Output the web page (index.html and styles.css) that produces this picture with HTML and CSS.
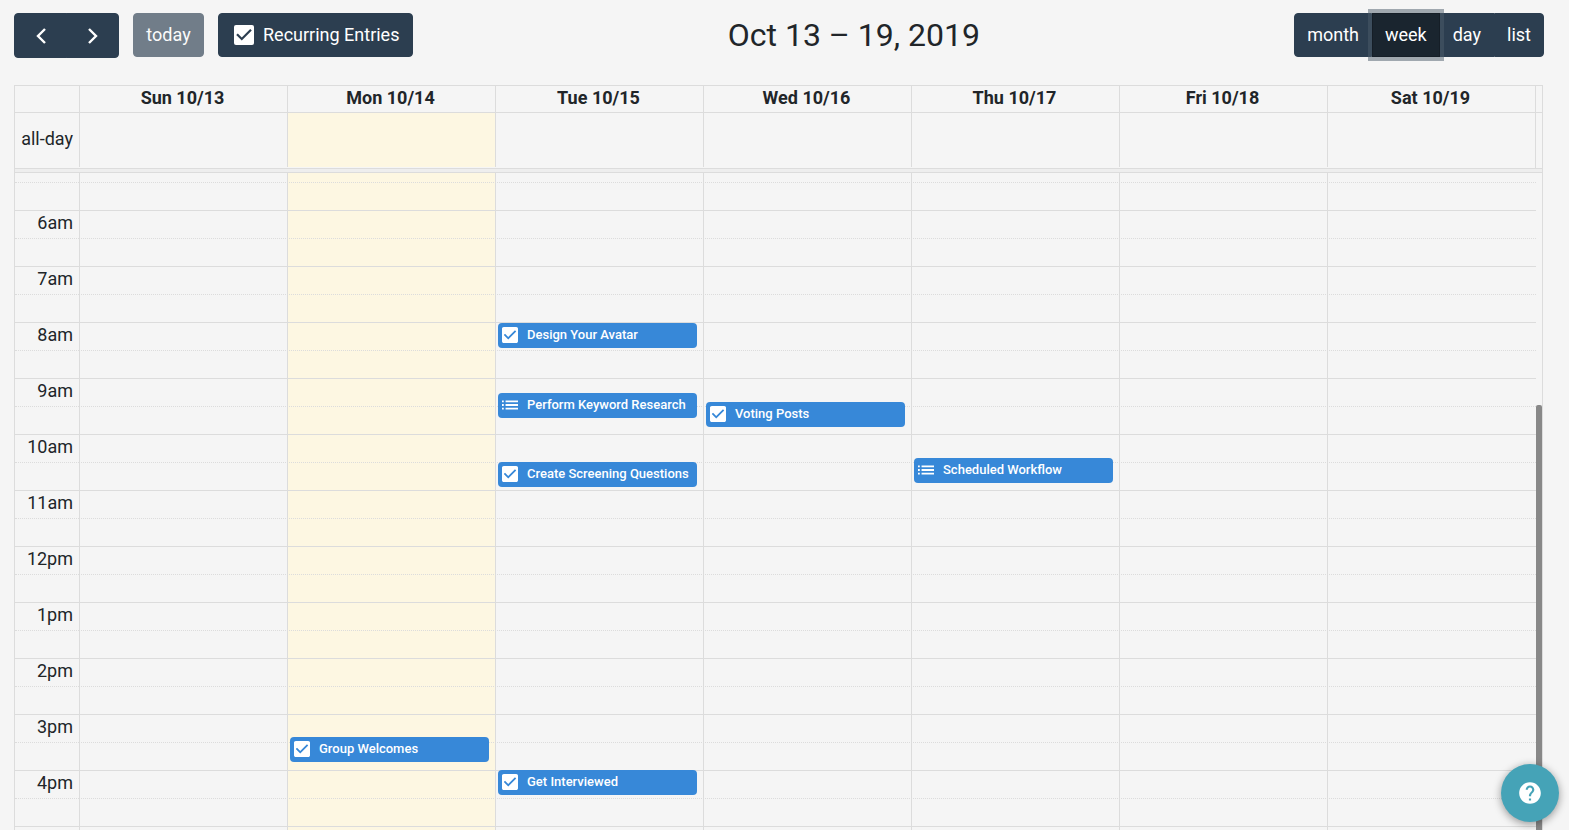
FILE: index.html
```
<!DOCTYPE html>
<html lang="en">
<head>
    <meta charset="UTF-8">
    <meta name="viewport" content="width=device-width, initial-scale=1.0">
    <title>Calendar</title>
    <link rel="stylesheet" href="styles.css">
</head>
<body>
    <!-- shared icons -->
    <svg class="sprite" aria-hidden="true">
        <symbol id="icon-tick" viewBox="3 3 18 18">
            <path d="M10 17l-5-5 1.41-1.41L10 14.17l7.59-7.59L19 8l-9 9z"/>
        </symbol>
        <symbol id="icon-task" viewBox="3 3 18 18">
            <path d="M19 3H5c-1.11 0-2 .9-2 2v14c0 1.1.89 2 2 2h14c1.11 0 2-.9 2-2V5c0-1.1-.89-2-2-2zm-9 14l-5-5 1.41-1.41L10 14.17l7.59-7.59L19 8l-9 9z"/>
        </symbol>
        <symbol id="icon-list" viewBox="3 3 18 18">
            <path d="M3 13h2v-2H3v2zm0 4h2v-2H3v2zm0-8h2V7H3v2zm4 4h14v-2H7v2zm0 4h14v-2H7v2zM7 7v2h14V7H7z"/>
        </symbol>
    </svg>

    <header class="toolbar">
        <div class="toolbar-left">
            <div class="btn-group">
                <button type="button" class="btn btn-arrow" aria-label="prev">
                    <svg width="12" height="18" viewBox="0 0 12 18"><path d="M10 2L3 9l7 7"/></svg>
                </button>
                <button type="button" class="btn btn-arrow" aria-label="next">
                    <svg width="12" height="18" viewBox="0 0 12 18"><path d="M2 2l7 7-7 7"/></svg>
                </button>
            </div>
            <button type="button" class="btn btn-today" disabled>today</button>
            <label class="btn btn-check">
                <span class="check">
                    <input type="checkbox" checked>
                    <svg><use href="#icon-tick"/></svg>
                </span>
                Recurring Entries
            </label>
        </div>
        <h2>Oct 13 – 19, 2019</h2>
        <div class="btn-group">
            <button type="button" class="btn">month</button>
            <button type="button" class="btn active">week</button>
            <button type="button" class="btn">day</button>
            <button type="button" class="btn">list</button>
        </div>
    </header>

    <main class="calendar">
        <div class="row head-row">
            <table>
                <tr>
                    <th class="axis"></th>
                    <th>Sun 10/13</th>
                    <th>Mon 10/14</th>
                    <th>Tue 10/15</th>
                    <th>Wed 10/16</th>
                    <th>Thu 10/17</th>
                    <th>Fri 10/18</th>
                    <th>Sat 10/19</th>
                </tr>
            </table>
        </div>
        <div class="row all-day-row">
            <table>
                <tr>
                    <td class="axis">all-day</td>
                    <td></td>
                    <td class="today"></td>
                    <td></td>
                    <td></td>
                    <td></td>
                    <td></td>
                    <td></td>
                </tr>
            </table>
        </div>
        <div class="divider"></div>

        <div class="scroller">
            <div class="time-grid">
                <table class="slats">
                    <tr><td class="axis"></td><td></td></tr>
                    <tr class="minor"><td class="axis"></td><td></td></tr>
                    <tr><td class="axis">6am</td><td></td></tr>
                    <tr class="minor"><td class="axis"></td><td></td></tr>
                    <tr><td class="axis">7am</td><td></td></tr>
                    <tr class="minor"><td class="axis"></td><td></td></tr>
                    <tr><td class="axis">8am</td><td></td></tr>
                    <tr class="minor"><td class="axis"></td><td></td></tr>
                    <tr><td class="axis">9am</td><td></td></tr>
                    <tr class="minor"><td class="axis"></td><td></td></tr>
                    <tr><td class="axis">10am</td><td></td></tr>
                    <tr class="minor"><td class="axis"></td><td></td></tr>
                    <tr><td class="axis">11am</td><td></td></tr>
                    <tr class="minor"><td class="axis"></td><td></td></tr>
                    <tr><td class="axis">12pm</td><td></td></tr>
                    <tr class="minor"><td class="axis"></td><td></td></tr>
                    <tr><td class="axis">1pm</td><td></td></tr>
                    <tr class="minor"><td class="axis"></td><td></td></tr>
                    <tr><td class="axis">2pm</td><td></td></tr>
                    <tr class="minor"><td class="axis"></td><td></td></tr>
                    <tr><td class="axis">3pm</td><td></td></tr>
                    <tr class="minor"><td class="axis"></td><td></td></tr>
                    <tr><td class="axis">4pm</td><td></td></tr>
                    <tr class="minor"><td class="axis"></td><td></td></tr>
                    <tr><td class="axis"></td><td></td></tr>
                </table>
                <!-- event top = time since 5am, 56px per hour -->
                <div class="days">
                    <div class="day"></div>
                    <div class="day today">
                        <a href="#" class="event" style="top: 583px"><svg><use href="#icon-task"/></svg>Group Welcomes</a>
                    </div>
                    <div class="day">
                        <a href="#" class="event" style="top: 169px"><svg><use href="#icon-task"/></svg>Design Your Avatar</a>
                        <a href="#" class="event" style="top: 239px"><svg><use href="#icon-list"/></svg>Perform Keyword Research</a>
                        <a href="#" class="event" style="top: 308px"><svg><use href="#icon-task"/></svg>Create Screening Questions</a>
                        <a href="#" class="event" style="top: 616px"><svg><use href="#icon-task"/></svg>Get Interviewed</a>
                    </div>
                    <div class="day">
                        <a href="#" class="event" style="top: 248px"><svg><use href="#icon-task"/></svg>Voting Posts</a>
                    </div>
                    <div class="day">
                        <a href="#" class="event" style="top: 304px"><svg><use href="#icon-list"/></svg>Scheduled Workflow</a>
                    </div>
                    <div class="day"></div>
                    <div class="day"></div>
                </div>
            </div>
            <div class="scrollbar"><div class="thumb"></div></div>
        </div>
    </main>

    <button type="button" class="help" aria-label="Help">
        <svg viewBox="0 0 24 24"><path d="M12 2C6.48 2 2 6.48 2 12s4.48 10 10 10 10-4.48 10-10S17.52 2 12 2zm1 17h-2v-2h2v2zm2.07-7.75l-.9.92C13.45 12.9 13 13.5 13 15h-2v-.5c0-1.1.45-2.1 1.17-2.83l1.24-1.26c.37-.36.59-.86.59-1.41 0-1.1-.9-2-2-2s-2 .9-2 2H8c0-2.21 1.79-4 4-4s4 1.79 4 4c0 .88-.36 1.68-.93 2.25z"/></svg>
    </button>
</body>
</html>
```
FILE: styles.css
```
* {
    box-sizing: border-box;
}
body {
    display: flex;
    flex-direction: column;
    height: 100vh;
    margin: 0;
    padding: 13px 25px 0 14px;
    overflow: hidden;
    background-color: #f5f5f5;
    color: #212529;
    font-family: Roboto, sans-serif;
    font-size: 18px;
    line-height: 24px;
}
.sprite {
    display: none;
}

/* Toolbar */
.toolbar {
    display: flex;
    justify-content: space-between;
    align-items: flex-start;
    height: 72px;
    flex-shrink: 0;
}
.toolbar-left {
    display: flex;
    align-items: flex-start;
    gap: 14px;
}
.toolbar h2 {
    margin: 0;
    font-size: 32px;
    font-weight: 400;
    line-height: 44px;
}
.btn-group {
    display: flex;
}
.btn {
    height: 44px;
    padding: 0 12px;
    border: 1px solid #2c3e50;
    border-radius: 4px;
    background-color: #2c3e50;
    color: #fff;
    font-family: inherit;
    font-size: 18px;
    line-height: 24px;
}
.btn:disabled {
    opacity: 0.65;
}
.btn-group .btn {
    position: relative;
}
.btn-group .btn:not(:first-child) {
    border-top-left-radius: 0;
    border-bottom-left-radius: 0;
}
.btn-group .btn:not(:last-child) {
    border-top-right-radius: 0;
    border-bottom-right-radius: 0;
}
.btn.active {
    z-index: 1;
    border-color: #151e27;
    background-color: #1a252f;
    box-shadow: 0 0 0 4px rgba(76, 91, 106, 0.5);
}
.btn-arrow {
    display: flex;
    align-items: center;
    justify-content: center;
    width: 53px;
    height: 45px;
}
.btn-arrow + .btn-arrow {
    margin-left: -1px;
}
.btn-arrow path {
    fill: none;
    stroke: #fff;
    stroke-width: 2.4;
}
.btn-today {
    min-width: 71px;
}
.btn-check {
    display: flex;
    align-items: center;
    gap: 9px;
    padding: 0 13px 0 15px;
}
.check {
    display: grid;
}
.check input,
.check svg {
    grid-area: 1 / 1;
    width: 20px;
    height: 20px;
    margin: 0;
}
.check input {
    appearance: none;
    border-radius: 2px;
    background-color: #fff;
}
.check svg {
    fill: #2c3e50;
    pointer-events: none;
}
.check input:not(:checked) + svg {
    visibility: hidden;
}

/* Calendar */
.calendar {
    display: flex;
    flex-direction: column;
    flex: 1;
    min-height: 0;
    margin-right: 1px;
    border: 1px solid #dcdcdc;
    border-bottom: 0;
}
table {
    width: 100%;
    border-spacing: 0;
    table-layout: fixed;
}
th,
td {
    padding: 0;
    border-left: 1px solid #dcdcdc;
}
.axis {
    width: 64px;
    padding-right: 6px;
    border-left: 0;
    text-align: right;
}
.today {
    background-color: #fdf7e2;
}
.row {
    padding-right: 6px;
    border-bottom: 1px solid #dcdcdc;
}
.row table {
    border-right: 1px solid #dcdcdc;
}
.head-row th {
    height: 26px;
    padding-right: 2px;
    vertical-align: top;
}
.all-day-row {
    border-bottom: 0;
}
.all-day-row table {
    padding-bottom: 1px;
}
.all-day-row td {
    height: 54px;
    padding-bottom: 2px;
}
.divider {
    flex-shrink: 0;
    height: 5px;
    border: 1px solid #dcdcdc;
    border-width: 1px 0;
    background-color: #eee;
}

/* Time grid */
.scroller {
    display: flex;
    flex: 1;
    min-height: 0;
    overflow: hidden;
}
.time-grid {
    position: relative;
    flex: 1;
    height: 700px;
    margin-top: -19px;
}
.slats {
    position: relative;
    z-index: 1;
}
.slats td {
    height: 28px;
    border-top: 1px solid #dcdcdc;
    border-left: 0;
    vertical-align: top;
}
.slats .minor td {
    border-top-style: dotted;
}
.days {
    position: absolute;
    top: 0;
    right: 1px;
    bottom: 0;
    left: 64px;
    display: flex;
}
.day {
    position: relative;
    flex: 1;
    border-left: 1px solid #dcdcdc;
}
.event {
    position: absolute;
    left: 2px;
    right: 6px;
    z-index: 2;
    display: flex;
    gap: 9px;
    height: 25px;
    padding-left: 4px;
    overflow: hidden;
    border-radius: 4px;
    background-color: #3788d8;
    color: #fff;
    font-size: 13px;
    font-weight: 500;
    line-height: 23px;
    text-decoration: none;
    white-space: nowrap;
}
.event svg {
    flex-shrink: 0;
    width: 16px;
    height: 16px;
    margin-top: 4px;
    fill: #fff;
}
.scrollbar {
    width: 6px;
    padding-top: 232px;
}
.thumb {
    height: 100%;
    border-radius: 2px 2px 0 0;
    background-color: #888;
}

/* Help */
.help {
    position: fixed;
    right: 10px;
    bottom: 8px;
    z-index: 3;
    display: flex;
    align-items: center;
    justify-content: center;
    width: 58px;
    height: 58px;
    padding: 0;
    border: 0;
    border-radius: 50%;
    background-color: #45a3b7;
    box-shadow: 0 2px 8px rgba(0, 0, 0, 0.4);
}
.help svg {
    width: 26px;
    height: 26px;
    fill: #fff;
}
```
